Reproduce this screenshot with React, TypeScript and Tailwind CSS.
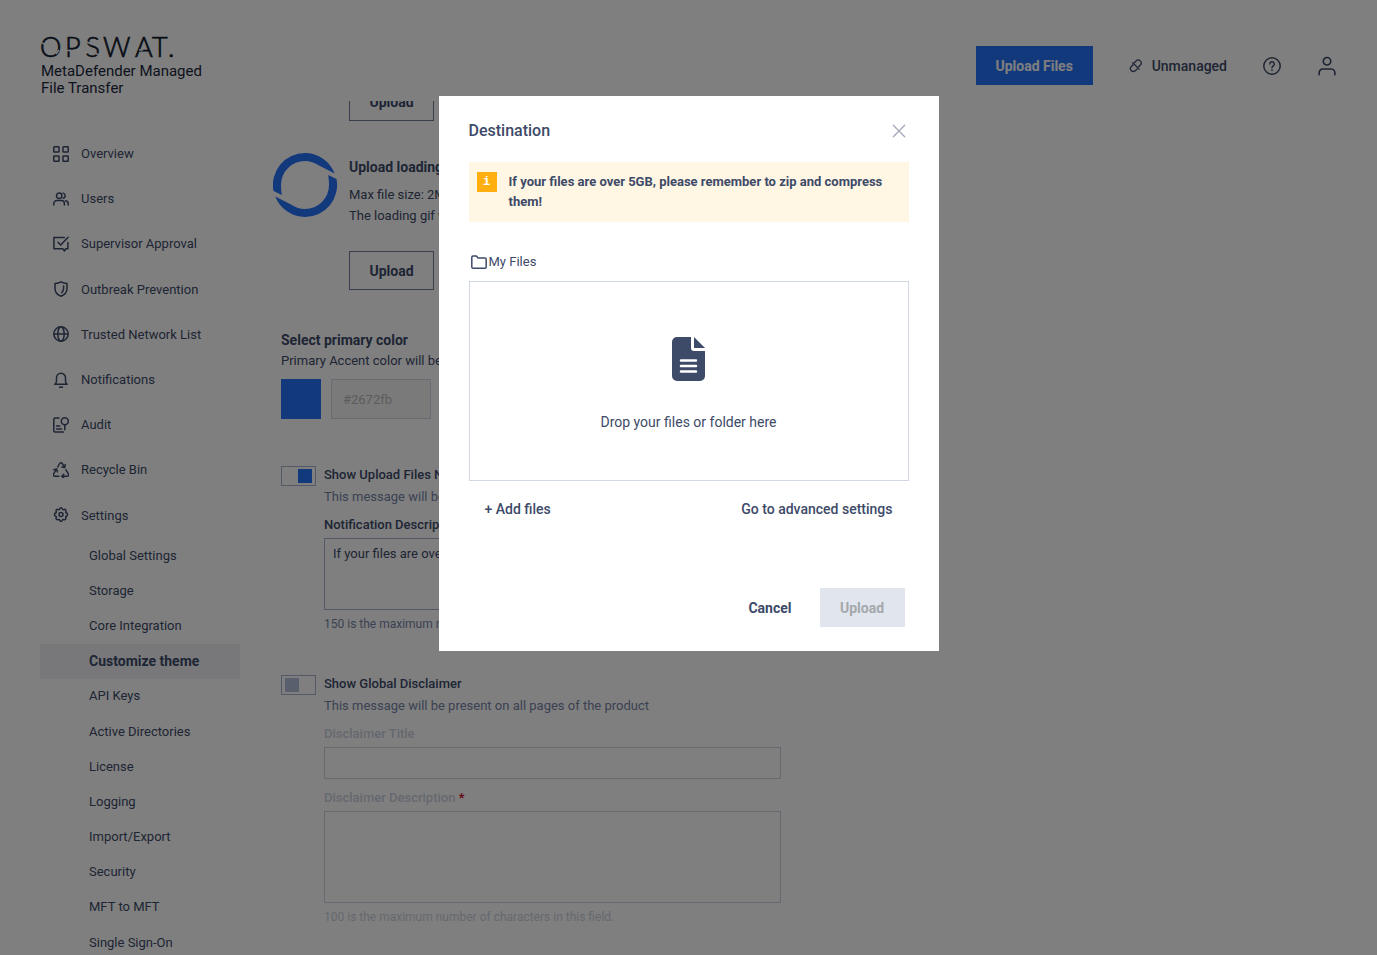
import { useState, type ReactNode } from 'react'

const SUB_ITEMS = [
  'Global Settings',
  'Storage',
  'Core Integration',
  'Customize theme',
  'API Keys',
  'Active Directories',
  'License',
  'Logging',
  'Import/Export',
  'Security',
  'MFT to MFT',
  'Single Sign-On',
]

function Icon({ children, className = 'size-4' }: { children: ReactNode; className?: string }) {
  return (
    <svg
      viewBox="0 0 16 16"
      fill="none"
      stroke="currentColor"
      strokeWidth="1.5"
      strokeLinecap="round"
      strokeLinejoin="round"
      className={`shrink-0 ${className}`}
      aria-hidden="true"
    >
      {children}
    </svg>
  )
}

const NAV_ITEMS: { label: string; icon: ReactNode }[] = [
  {
    label: 'Overview',
    icon: (
      <>
        <rect x="0.8" y="0.8" width="5.2" height="5.2" rx="0.5" />
        <rect x="10" y="0.8" width="5.2" height="5.2" rx="0.5" />
        <rect x="0.8" y="10" width="5.2" height="5.2" rx="0.5" />
        <rect x="10" y="10" width="5.2" height="5.2" rx="0.5" />
      </>
    ),
  },
  {
    label: 'Users',
    icon: (
      <>
        <circle cx="6.2" cy="4.7" r="2.7" />
        <path d="M0.8 14v-1.4a3 3 0 0 1 3-3h4.6a3 3 0 0 1 3 3V14" />
        <path d="M10.2 2.1a2.7 2.7 0 0 1 0 5.2" />
        <path d="M12.6 9.7c1.7.3 2.6 1.5 2.6 2.9V14" />
      </>
    ),
  },
  {
    label: 'Supervisor Approval',
    icon: (
      <>
        <path d="M11.3 1.5H0.9v11.3h9l1.5 2.2 1.3-2.2h2.2V6.5" />
        <path d="M5 6.3l2.7 2.8 7.4-7.8" />
      </>
    ),
  },
  {
    label: 'Outbreak Prevention',
    icon: (
      <>
        <path d="M8 0.8c2 1.2 4 1.6 6 1.7v5c0 3.6-2.3 6.3-6 7.7-3.7-1.4-6-4.1-6-7.7v-5c2-.1 4-.5 6-1.7z" />
        <path d="M10.6 5v2.5c0 1.7-.6 3-1.9 4.1" />
      </>
    ),
  },
  {
    label: 'Trusted Network List',
    icon: (
      <>
        <circle cx="8" cy="8" r="7.2" />
        <ellipse cx="8" cy="8" rx="3.2" ry="7.2" />
        <path d="M0.8 8h14.4" />
      </>
    ),
  },
  {
    label: 'Notifications',
    icon: (
      <>
        <path d="M1.8 12.3h12.4c-1.2-.8-1.7-1.8-1.7-3.3V5.8a4.5 4.5 0 0 0-9 0V9c0 1.5-.5 2.5-1.7 3.3z" />
        <path d="M6.6 15c.9.5 1.9.5 2.8 0" />
      </>
    ),
  },
  {
    label: 'Audit',
    icon: (
      <>
        <path d="M6 0.9H2.2A1.4 1.4 0 0 0 0.8 2.3v11.4a1.4 1.4 0 0 0 1.4 1.4h8.2" />
        <circle cx="11.8" cy="4.3" r="3.5" />
        <path d="M11.8 7.8v5M3.6 9h3.2M3.6 12h5" />
      </>
    ),
  },
  {
    label: 'Recycle Bin',
    icon: (
      <>
        <path d="M4.7 5L6.7 1.5c.6-1 2-1 2.6 0l2.2 3.8" />
        <path d="M12.2 2.6l-.5 2.9-2.9-.5" />
        <path d="M12.9 7.9l2.5 4c.6 1-.1 2.3-1.3 2.3H9.300" />
        <path d="M10.8 12.2l-2 2 2 1.900" />
        <path d="M5.9 14.200H1.900c-1.200 0-1.900-1.300-1.300-2.300L3.300 7.400" />
        <path d="M0.800 7.800l2.700-.7.900 2.700" />
      </>
    ),
  },
  {
    label: 'Settings',
    icon: (
      <>
        <path d="M6.7 1.9c.4-1.4 2.2-1.4 2.6 0 .2.7 1 1 1.6.7 1.3-.7 2.5.5 1.900 1.800-.3.6 0 1.400.7 1.600 1.400.5 1.400 2.500 0 3-.7.2-1 1-.7 1.600.6 1.300-.6 2.500-1.900 1.900-.6-.3-1.400 0-1.600.7-.4 1.400-2.200 1.400-2.600 0-.2-.7-1-1-1.600-.7-1.300.6-2.500-.6-1.900-1.900.3-.6 0-1.400-.7-1.600-1.400-.5-1.400-2.500 0-3 .7-.2 1-1 .7-1.600C2.600 3.100 3.800 1.900 5.100 2.600c.6.300 1.400 0 1.600-.7z" />
        <circle cx="8" cy="7.600" r="2" />
      </>
    ),
  },
]

function Logo() {
  return (
    <div className="pl-px">
      <svg viewBox="0 0 134 22" className="h-[22px] w-[134px] overflow-visible" role="img" aria-label="OPSWAT.">
        <text
          y="20.5"
          x="-1 24 44.5 62 94 111 127"
          className="fill-[#131c30] stroke-[#131c30] font-['Lato'] text-[27px] font-light"
          strokeWidth="0.7"
        >
          OPSWAT.
        </text>
        <path
          d="M0 6l4 3M15 18l3-4M25 14.500h5M46 6l4 2M54 17l4 2M98 14h4"
          fill="none"
          className="stroke-white"
          strokeWidth="1.5"
        />
      </svg>
      <p className="mt-[5px] text-[15px] leading-[17px] text-[#1b273c]">
        MetaDefender Managed
        <br />
        File Transfer
      </p>
    </div>
  )
}

function Header({ onUpload }: { onUpload: () => void }) {
  return (
    <header className="flex h-[101px] shrink-0 items-start justify-between px-10 pt-9">
      <Logo />
      <div className="flex items-center pt-[10px] text-[#3d4a68]">
        <button
          type="button"
          onClick={onUpload}
          className="mr-9 h-[39px] w-[117px] bg-[#2672fb] text-sm font-bold text-white"
        >
          Upload Files
        </button>
        <button type="button" className="mr-9 flex items-center gap-[9px] text-sm font-medium">
          <Icon className="size-[14px]">
            <path d="M6.200 4.200l1.900-1.900a3.300 3.300 0 0 1 4.900 4.600l-2 2" />
            <path d="M9.400 11.300l-1.900 1.900a3.300 3.300 0 0 1-4.900-4.600l2-2" />
            <path d="M4.200 4.200l7.400 7.400" />
          </Icon>
          Unmanaged
        </button>
        <button type="button" aria-label="Help" className="mr-9">
          <Icon className="size-[18px]">
            <circle cx="8" cy="8" r="7.300" strokeWidth="1.300" />
            <path d="M6 6.300a2 2 0 1 1 3 1.700c-.7.400-1 .8-1 1.500" strokeWidth="1.300" />
            <path d="M8 11.600v.1" />
          </Icon>
        </button>
        <button type="button" aria-label="Account">
          <Icon className="size-[20px]">
            <circle cx="8" cy="4.200" r="3" strokeWidth="1.300" />
            <path d="M1.700 15v-1.600a3 3 0 0 1 3-3h6.600a3 3 0 0 1 3 3V15" strokeWidth="1.300" />
          </Icon>
        </button>
      </div>
    </header>
  )
}

function Sidebar() {
  return (
    <nav className="w-[200px] shrink-0 pt-[30px] text-[13px] text-[#3d4a68]">
      <ul className="grid h-[407px] auto-rows-fr">
        {NAV_ITEMS.map((item) => (
          <li key={item.label} className="flex">
            <a href="#" className="flex items-center gap-3 pl-[13px]">
              <Icon>{item.icon}</Icon>
              {item.label}
            </a>
          </li>
        ))}
      </ul>
      <ul className="grid h-[422px] auto-rows-fr">
        {SUB_ITEMS.map((label) => (
          <li key={label} className="flex">
            <a
              href="#"
              className={
                label === 'Customize theme'
                  ? 'flex flex-1 items-center bg-[#f0f1f6] pl-[49px] text-sm font-bold'
                  : 'flex flex-1 items-center pl-[49px]'
              }
            >
              {label}
            </a>
          </li>
        ))}
      </ul>
    </nav>
  )
}

function Spinner() {
  const arc = 'M0.5 38A32 32 0 0 1 32 0A32 32 0 0 1 61.7 20.5L46 12.5C41 9.5 37 8 32 8A24 24 0 0 0 8 32Q8 37 8.8 42Z'
  return (
    <svg viewBox="0 0 64 64" className="size-16 shrink-0 fill-[#2672fb]" aria-hidden="true">
      <path d={arc} />
      <path d={arc} transform="rotate(180 32 32)" />
    </svg>
  )
}

function OutlineButton({ children }: { children: ReactNode }) {
  return (
    <button type="button" className="block h-[39px] w-[85px] border border-[#707c9b] text-sm font-bold">
      {children}
    </button>
  )
}

interface ToggleProps {
  id: string
  label: string
  defaultChecked?: boolean
  children: ReactNode
}

function ToggleSection({ id, label, defaultChecked, children }: ToggleProps) {
  return (
    <section className="flex items-start gap-2">
      <input
        id={id}
        type="checkbox"
        defaultChecked={defaultChecked}
        className="flex h-5 w-[35px] shrink-0 appearance-none items-center border border-[#a9b3cf] px-[3px] before:size-[14px] before:bg-[#b4bedb] before:content-[''] checked:justify-end checked:before:bg-[#2672fb]"
      />
      <div className="flex-1">
        <label htmlFor={id} className="block text-[13px] leading-[18px] font-medium">
          {label}
        </label>
        <p className="mt-1 text-[13px] leading-[18px] text-[#7683a6]">This message will be present on all pages of the product</p>
        {children}
      </div>
    </section>
  )
}

function ThemeSettings() {
  return (
    <main className="min-w-0 flex-1 overflow-hidden pl-[33px]">
      <div className="-mt-[19px] max-w-[508px] text-[#3d4a68]">
        <div className="ml-[76px]">
          <OutlineButton>Upload</OutlineButton>
        </div>

        <div className="mt-8 flex items-start gap-3">
          <Spinner />
          <div className="pt-1">
            <h3 className="text-sm leading-5 font-bold">Upload loading gif</h3>
            <p className="mt-[7px] mb-[25px] text-[13px] leading-[21px]">
              Max file size: 2MB
              <br />
              The loading gif will be displayed during upload
            </p>
            <OutlineButton>Upload</OutlineButton>
          </div>
        </div>

        <div className="pl-2">
          <h3 className="mt-10 text-sm leading-5 font-bold">Select primary color</h3>
          <p className="text-[13px] leading-[21px]">Primary Accent color will be applied</p>
          <div className="mt-2 flex gap-[10px]">
            <button type="button" aria-label="Pick color" className="size-10 bg-[#2672fb]" />
            <input
              disabled
              aria-label="Primary color"
              value="#2672fb"
              className="h-10 w-[100px] border border-[#d2d7e6] bg-[#f5f5f5] px-[11px] text-[13px] text-[#b8b8b8]"
            />
          </div>

          <div className="mt-[47px]">
            <ToggleSection id="notification" label="Show Upload Files Notification" defaultChecked>
              <label htmlFor="notification-text" className="mt-[10px] block text-[13px] leading-[18px] font-medium">
                Notification Description
              </label>
              <textarea
                id="notification-text"
                defaultValue="If your files are over 5GB, please remember to zip and compress them!"
                className="mt-1 block h-[72px] w-full resize-none border border-[#a9b3cf] px-2 py-[5px] text-[13px] leading-5"
              />
              <p className="mt-1 text-xs leading-5 text-[#7683a6]">150 is the maximum number of characters in this field.</p>
            </ToggleSection>
          </div>

          <div className="mt-[41px]">
            <ToggleSection id="disclaimer" label="Show Global Disclaimer">
              <label htmlFor="disclaimer-title" className="mt-[10px] block text-[13px] leading-[18px] font-medium text-[#ccd1de]">
                Disclaimer Title
              </label>
              <input
                id="disclaimer-title"
                disabled
                className="mt-1 block h-8 w-full border border-[#ced3e2] px-2 text-[13px]"
              />
              <label htmlFor="disclaimer-text" className="mt-[10px] block text-[13px] leading-[18px] font-medium text-[#ccd1de]">
                Disclaimer Description <span className="text-[#d0021b]">*</span>
              </label>
              <textarea
                id="disclaimer-text"
                disabled
                className="mt-1 block h-[92px] w-full resize-none border border-[#ced3e2] px-2 py-[5px] text-[13px]"
              />
              <p className="mt-1 text-xs leading-5 text-[#ccd1de]">100 is the maximum number of characters in this field.</p>
            </ToggleSection>
          </div>
        </div>
      </div>
    </main>
  )
}

function UploadDialog({ onClose }: { onClose: () => void }) {
  return (
    <div className="fixed inset-0 flex items-start justify-center bg-black/50 pt-24">
      <div role="dialog" aria-labelledby="dialog-title" className="w-[500px] bg-white px-[30px] pt-6 pb-6 text-[#3d4a68]">
        <div className="flex h-[22px] items-center justify-between">
          <h2 id="dialog-title" className="text-base font-medium">Destination</h2>
          <button type="button" aria-label="Close" onClick={onClose} className="mr-[3px] text-[#a2a8b8]">
            <Icon className="size-[14px]">
              <path d="M1.5 1.5l13 13M14.5 1.5l-13 13" />
            </Icon>
          </button>
        </div>

        <div className="mt-5 flex h-[60px] items-start gap-3 bg-[#fff6e4] px-2 py-[10px]">
          <span className="flex size-5 shrink-0 items-center justify-center bg-[#ffaf10] font-['Liberation_Mono'] text-xs font-bold text-white">
            i
          </span>
          <p className="text-[13px] leading-5 font-bold">
            If your files are over 5GB, please remember to zip and compress them!
          </p>
        </div>

        <div className="mt-[30px] flex h-5 items-center gap-0.5 pl-0.5 text-[13px]">
          <Icon>
            <path d="M0.8 12.9V3.3c0-.8.6-1.3 1.3-1.3h3.3l1.7 2h6.8c.8 0 1.3.6 1.3 1.3v7.6c0 .8-.5 1.3-1.3 1.3H2.1c-.7 0-1.3-.5-1.3-1.3z" />
          </Icon>
          My Files
        </div>

        <div className="mt-[9px] flex h-[200px] flex-col items-center border border-[#d2d7e6] pt-[55px]">
          <svg viewBox="0 0 33 44" className="h-11 w-[33px] shrink-0" aria-hidden="true">
            <path d="M5 0h14v11a3 3 0 0 0 3 3h11v25a5 5 0 0 1-5 5H5a5 5 0 0 1-5-5V5a5 5 0 0 1 5-5z" fill="#3d4a68" />
            <path d="M22 0l11 11H22z" fill="#3d4a68" />
            <path d="M9 23.5h15M9 29h15M9 34.5h15" stroke="white" strokeWidth="2.5" strokeLinecap="round" />
          </svg>
          <p className="mt-[31px] text-sm leading-5">Drop your files or folder here</p>
        </div>

        <div className="mt-[18px] flex h-5 items-center justify-between px-4 text-sm font-medium">
          <button type="button">+ Add files</button>
          <button type="button">Go to advanced settings</button>
        </div>

        <div className="mt-[69px] flex items-center justify-end gap-7 pr-1 text-sm font-bold">
          <button type="button" onClick={onClose}>Cancel</button>
          <button type="button" disabled className="h-[39px] w-[85px] bg-[#e1e5ee] text-[#a3a8ab]">
            Upload
          </button>
        </div>
      </div>
    </div>
  )
}

export default function App() {
  const [open, setOpen] = useState(true)

  return (
    <div className="flex h-screen flex-col overflow-hidden bg-white font-['Roboto',sans-serif]">
      <Header onUpload={() => setOpen(true)} />
      <div className="flex min-h-0 flex-1 pl-10">
        <Sidebar />
        <ThemeSettings />
      </div>
      {open && <UploadDialog onClose={() => setOpen(false)} />}
    </div>
  )
}
